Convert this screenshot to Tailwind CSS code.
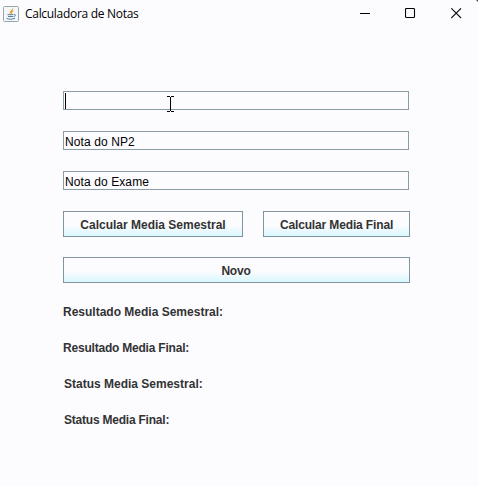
<!DOCTYPE html>
<html lang="pt-BR">
<head>
<meta charset="utf-8">
<title>Calculadora de Notas</title>
<script src="https://cdn.jsdelivr.net/npm/@tailwindcss/browser@4"></script>
</head>
<body class="w-[478px] h-[486px] overflow-hidden bg-[#fcfcff] font-['Liberation_Sans',Arial,sans-serif] text-[12px] text-[#333]">
<div class="relative flex h-full flex-col">
  <header class="flex h-[27px] items-center pl-[3px] text-black">
    <svg class="h-4 w-4 shrink-0" viewBox="0 0 16 16" fill="none">
      <rect x=".5" y=".5" width="15" height="15" rx="1" fill="#f5f8fb" stroke="#94aaa8"/>
      <path d="M9.5 2.500C10 4.500 6 5 7.200 8M10.500 4.700C8.500 5.500 8 6.500 9 8" stroke="#e8a33a" stroke-width="1.2"/>
      <path d="M4.500 8.700h6M5 10.500h5M11 8.500c2-.4 2 1.800-.5 2.300M3.500 12.500c2 .9 6 .9 8.500-.2" stroke="#557d9e"/>
    </svg>
    <h1 class="ml-[6px] whitespace-nowrap font-['Open_Sans','Noto_Sans',sans-serif] text-[12px] leading-4 tracking-[-0.3px]">Calculadora de Notas</h1>
    <div class="ml-auto flex items-center pr-4">
      <svg class="mr-[34px] h-[11px] w-[11px]" viewBox="0 0 11 11"><path d="M0 5.500h10" stroke="#000"/></svg>
      <svg class="mr-[35px] h-[11px] w-[11px]" viewBox="0 0 11 11"><rect x=".5" y=".5" width="9" height="9" rx="1" fill="none" stroke="#000" stroke-width="1.1"/></svg>
      <svg class="h-[11px] w-[11px]" viewBox="0 0 11 11"><path d="M.3.300l9.700 9.700M10 .3l-9.700 9.700" stroke="#111" stroke-width="1.1"/></svg>
    </div>
  </header>
  <main class="flex flex-col pl-[63px] pt-16">
    <div class="flex w-[346px] flex-col gap-[21px] text-black">
      <div class="flex h-[19px] items-center border border-[#8a9ca5] pl-[1px]"><span class="h-4 w-px bg-black"></span></div>
      <div class="flex h-[19px] items-center border border-[#8a9ca5] pl-[1px] pt-[2px] tracking-[0.1px]">Nota do NP2</div>
      <div class="flex h-[19px] items-center border border-[#8a9ca5] pl-[1px] pt-[2px] tracking-[0.1px]">Nota do Exame</div>
    </div>
    <div class="mt-[21px] flex gap-5 font-bold">
      <button class="h-[26px] w-[180px] border border-[#8195a0] bg-linear-to-b from-[#fcfcff] from-55% to-[#d8f7fd] pt-px">Calcular Media Semestral</button>
      <button class="h-[26px] w-[147px] border border-[#8195a0] bg-linear-to-b from-[#fcfcff] from-55% to-[#d8f7fd] pt-px tracking-[-0.14px]">Calcular Media Final</button>
    </div>
    <button class="mt-5 h-[26px] w-[347px] border border-[#8195a0] bg-linear-to-b from-[#fcfcff] from-55% to-[#d8f7fd] pt-px pr-px font-bold tracking-[-0.2px]">Novo</button>
    <div class="mt-[21px] flex flex-col gap-5 font-bold leading-4">
      <p>Resultado Media Semestral:</p>
      <p class="tracking-[-0.21px]">Resultado Media Final:</p>
      <p class="pl-px">Status Media Semestral:</p>
      <p class="pl-px tracking-[-0.22px]">Status Media Final:</p>
    </div>
  </main>
  <svg class="absolute left-[167px] top-[96px] h-4 w-[7px]" viewBox="0 0 7 16"><path d="M0 .5h3M4 .5h3M3.500 1v14M0 15.500h3M4 15.500h3" stroke="#000" fill="none"/></svg>
  <svg class="absolute right-0 top-0 h-[2px] w-[2px]" viewBox="0 0 2 2"><path d="M0 0h2v2z" fill="#36523b"/></svg>
</div>
</body>
</html>
